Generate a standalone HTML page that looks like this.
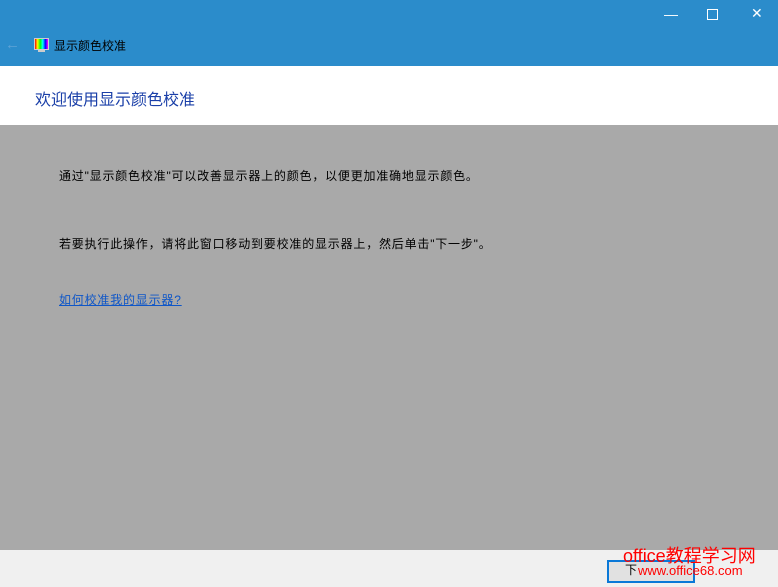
<!DOCTYPE html>
<html><head><meta charset="utf-8"><style>
body{margin:0;width:778px;height:587px;overflow:hidden;font-family:"Liberation Sans","Microsoft YaHei","Noto Sans CJK SC",sans-serif;position:relative;background:#a9a9a9}
.top{position:absolute;left:0;top:0;width:778px;height:66px;background:#2b8ccb}
.hdr{position:absolute;left:0;top:66px;width:778px;height:59px;background:#fff}
.foot{position:absolute;left:0;top:550px;width:778px;height:37px;background:#f0f0f0}
.t{position:absolute;white-space:nowrap}
.b{letter-spacing:0.8px}
</style></head><body>
<div class="top"></div>
<div class="t" style="left:664px;top:6px;color:#fff;font-size:14px">—</div>
<div style="position:absolute;left:707px;top:9px;width:9px;height:9px;border:1px solid #fff"></div>
<div class="t" style="left:751px;top:5px;color:#fff;font-size:14px">✕</div>
<div class="t" style="left:5px;top:36px;color:#5ea3d6;font-size:15px">←</div>
<div style="position:absolute;left:34px;top:38px;width:13px;height:10px;border:1px solid #ccc;background:linear-gradient(90deg,#f00,#ff0,#0f0,#0ff,#00f,#f0f)"></div>
<div style="position:absolute;left:38px;top:50px;width:7px;height:2px;background:#ccc"></div>
<div class="t" style="left:54px;top:37px;font-size:12px;color:#000">显示颜色校准</div>
<div class="hdr"></div>
<div class="t" style="left:35px;top:86px;font-size:16px;color:#1a3fa8">欢迎使用显示颜色校准</div>
<div class="t b" style="left:59px;top:167px;font-size:12px;color:#000">通过"显示颜色校准"可以改善显示器上的颜色，以便更加准确地显示颜色。</div>
<div class="t b" style="left:59px;top:235px;font-size:12px;color:#000">若要执行此操作，请将此窗口移动到要校准的显示器上，然后单击"下一步"。</div>
<div class="t b" style="left:59px;top:291px;font-size:12px;color:#0e56c8;text-decoration:underline">如何校准我的显示器?</div>
<div class="foot"></div>
<div style="position:absolute;left:607px;top:560px;width:84px;height:19px;border:2px solid #0a78d7;background:#e1e1e1"></div>
<div class="t" style="left:625px;top:561px;font-size:12px;color:#000">下</div>
<div class="t" style="left:623px;top:542px;font-size:18px;color:#f00">office教程学习网</div>
<div class="t" style="left:638px;top:563px;font-size:13px;color:#f00">www.office68.com</div>
</body></html>
